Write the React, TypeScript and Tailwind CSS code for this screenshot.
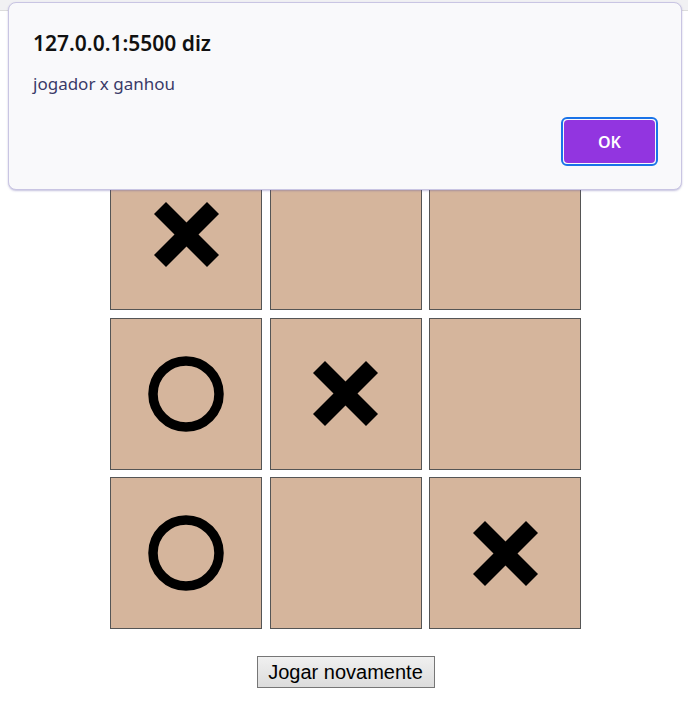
import React from "react";

type Mark = "X" | "O" | "";

const board: Mark[] = ["X", "", "", "O", "X", "", "O", "", "X"];

function Cross() {
  return (
    <svg width="65" height="65" viewBox="0 0 65 65">
      <line x1="6" y1="6" x2="59" y2="59" stroke="black" strokeWidth="17" />
      <line x1="59" y1="6" x2="6" y2="59" stroke="black" strokeWidth="17" />
    </svg>
  );
}

function Circle() {
  return (
    <svg width="76" height="76" viewBox="0 0 76 76">
      <circle cx="38" cy="38" r="33" fill="none" stroke="black" strokeWidth="9.5" />
    </svg>
  );
}

function Cell({ mark }: { mark: Mark }) {
  return (
    <div className="flex h-[152px] w-[152px] items-center justify-center border border-[#555555] bg-[#d5b59c]">
      {mark === "X" && <Cross />}
      {mark === "O" && <Circle />}
    </div>
  );
}

function AlertDialog() {
  return (
    <div className="absolute left-[8px] top-[2px] h-[188px] w-[674px] rounded-[8px] border border-[#c9c5e3] bg-[#f9f9fb] shadow-[0_1px_2px_rgba(90,80,160,0.35)]">
      <p className="absolute left-[24px] top-[30px] font-['Noto_Sans',sans-serif] text-[21px] font-semibold leading-none text-[#111111]">
        127.0.0.1:5500 diz
      </p>
      <p className="absolute left-[24px] top-[72px] font-['Noto_Sans',sans-serif] text-[17px] leading-none text-[#3a3a68]">
        jogador x ganhou
      </p>
      <div className="absolute left-[552px] top-[114px] rounded-[6px] border-2 border-[#1a73e8] p-[1px]">
        <button className="flex h-[43px] w-[91px] items-center justify-center rounded-[4px] bg-[#9235e0] font-['Noto_Sans',sans-serif] text-[16px] font-semibold text-white">
          OK
        </button>
      </div>
    </div>
  );
}

export default function App() {
  return (
    <div className="relative min-h-[712px] w-full bg-white">
      <div className="h-[11px] border-b border-[#dcdcdc] bg-[#f1f1f3]" />
      <div className="flex flex-col items-center pl-[3px] pt-[147px]">
        <div className="grid grid-cols-[152px_152px_152px] gap-[7.5px]">
          {board.map((m, i) => (
            <Cell key={i} mark={m} />
          ))}
        </div>
        <button className="mt-[27px] h-[32px] w-[178px] border border-[#767676] bg-gradient-to-b from-[#f0f0f0] to-[#dcdcdc] font-['Liberation_Sans',Arial,sans-serif] text-[20px] leading-none text-black">
          Jogar novamente
        </button>
      </div>
      <AlertDialog />
    </div>
  );
}
